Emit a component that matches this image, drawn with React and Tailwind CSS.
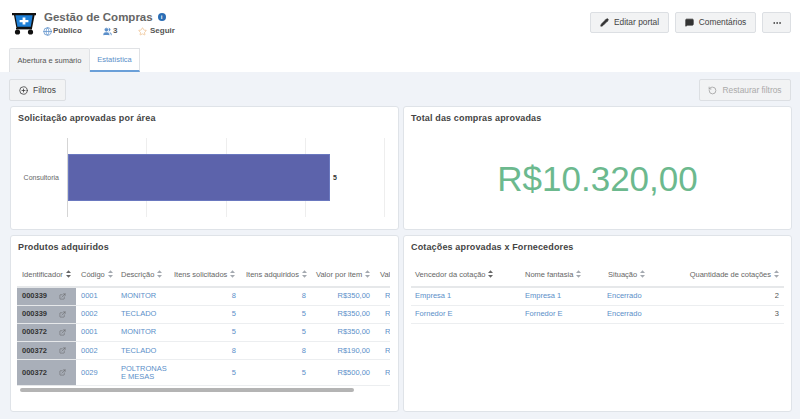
import React from "react";
import { Globe, Users, Star, Pencil, MessageSquare, MoreHorizontal, RotateCcw, CirclePlus, ExternalLink } from "lucide-react";

const font = "font-['Liberation_Sans',Arial,sans-serif]";

function Sort({ active = false }) {
  return (
    <svg width="5" height="8" viewBox="0 0 6 9" className={`inline-block ml-[3px] align-[-1px] ${active ? "text-[#666]" : "text-[#a4a9b0]"}`} fill="currentColor">
      <path d="M3 0 6 3.4H0zM3 9 0 5.6h6z" />
    </svg>
  );
}

function Cart() {
  return (
    <svg width="24" height="22" viewBox="0 0 24 22" className="shrink-0 mt-[1px]">
      <path d="M0 0h24v2.2h-1.4L20 15.6H4.5L2 2.2H0z" fill="#111" />
      <path d="M3.4 2.2h17.2L18.8 13.8H5.4z" fill="#1d7fd6" />
      <path d="M10.6 4.6h2.8v2.3h3v2.4h-3v2.3h-2.8V9.3h-3V6.9h3z" fill="#fff" />
      <circle cx="5.5" cy="19" r="2.6" fill="#111" />
      <circle cx="18.5" cy="19" r="2.6" fill="#111" />
      <rect x="4" y="15" width="16" height="1.4" fill="#111" />
    </svg>
  );
}

function Btn({ icon, children, className = "" }) {
  return (
    <button className={`h-[21px] flex items-center justify-center gap-[5px] bg-[#f2f3f4] border border-[#dcdfe3] rounded-[2px] text-[8.4px] text-[#444] ${className}`}>
      {icon}
      {children}
    </button>
  );
}

function Card({ title, className = "", children }) {
  return (
    <section className={`bg-white border border-[#dfe3e8] rounded-[3px] min-w-0 ${className}`}>
      <h2 className="text-[9px] font-bold text-[#444] tracking-[0.15px] pl-[7px] pt-[4px] leading-[14px]">{title}</h2>
      {children}
    </section>
  );
}

const leftRows = [
  ["000339", "0001", "MONITOR", "8", "8", "R$350,00"],
  ["000339", "0002", "TECLADO", "5", "5", "R$350,00"],
  ["000372", "0001", "MONITOR", "5", "5", "R$350,00"],
  ["000372", "0002", "TECLADO", "8", "8", "R$190,00"],
  ["000372", "0029", "POLTRONAS E MESAS", "5", "5", "R$500,00"],
];

const Th = ({ children, className = "" }) => (
  <th className={`font-normal text-[#666] h-[25px] border-b-2 border-[#e6e8ea] px-[5px] text-left whitespace-nowrap ${className}`}>{children}</th>
);

function ProductTable() {
  return (
    <div className="overflow-hidden mx-[6px] mt-[8px] w-[373px] relative h-[134px]">
      <table className="table-fixed border-collapse text-[7.5px] leading-[8px] w-[460px]">
        <colgroup>
          <col className="w-[59px]" />
          <col className="w-[40px]" />
          <col className="w-[53px]" />
          <col className="w-[72px]" />
          <col className="w-[70px]" />
          <col className="w-[64px]" />
          <col className="w-[102px]" />
        </colgroup>
        <thead>
          <tr>
            <Th>Identificador<Sort active /></Th>
            <Th>Código<Sort /></Th>
            <Th>Descrição<Sort /></Th>
            <Th>Itens solicitados<Sort /></Th>
            <Th>Itens adquiridos<Sort /></Th>
            <Th>Valor por item<Sort /></Th>
            <Th>Valor total<Sort /></Th>
          </tr>
        </thead>
        <tbody>
          {leftRows.map((r, i) => {
            const h = i === 4 ? "h-[25.5px]" : "h-[18.2px]";
            return (
              <tr key={i} className={`${h} text-[#5b8fc9]`}>
                <td className="bg-[#a9afb9] border-b border-[#e6e8ea] text-[#333] font-bold px-[5px]">
                  <div className="flex items-center justify-between pr-[5px]">
                    <span>{r[0]}</span>
                    <ExternalLink size={7} className="text-[#555]" strokeWidth={1.5} />
                  </div>
                </td>
                <td className="border-b border-[#eceef0] px-[5px]">{r[1]}</td>
                <td className="border-b border-[#eceef0] pl-[5px]">{r[2]}</td>
                <td className="border-b border-[#eceef0] px-[5px] text-right">{r[3]}</td>
                <td className="border-b border-[#eceef0] px-[5px] text-right">{r[4]}</td>
                <td className="border-b border-[#eceef0] px-[5px] text-right">{r[5]}</td>
                <td className="border-b border-[#eceef0] pl-[10px]">{r[5]}</td>
              </tr>
            );
          })}
        </tbody>
      </table>
      <div className="absolute left-[3px] top-[126px] w-[334px] h-[3.5px] rounded-full bg-[#b4b4b4]" />
    </div>
  );
}

function QuoteTable() {
  const rows = [
    ["Empresa 1", "Empresa 1", "Encerrado", "2"],
    ["Fornedor E", "Fornedor E", "Encerrado", "3"],
  ];
  return (
    <div className="mx-[7px] mt-[8px]">
      <table className="table-fixed border-collapse text-[7.5px] leading-[8px] w-full">
        <colgroup>
          <col className="w-[110px]" />
          <col className="w-[82px]" />
          <col className="w-[70px]" />
          <col />
        </colgroup>
        <thead>
          <tr>
            <Th className="pl-[4px]">Vencedor da cotação<Sort active /></Th>
            <Th className="pl-[4px]">Nome fantasia<Sort /></Th>
            <Th>Situação<Sort /></Th>
            <Th className="text-right">Quantidade de cotações<Sort /></Th>
          </tr>
        </thead>
        <tbody>
          {rows.map((r, i) => (
            <tr key={i} className="h-[18px] text-[#5b8fc9]">
              <td className="border-b border-[#eceef0] px-[4px]">{r[0]}</td>
              <td className="border-b border-[#eceef0] px-[4px]">{r[1]}</td>
              <td className="border-b border-[#eceef0] px-[4px]">{r[2]}</td>
              <td className="border-b border-[#eceef0] px-[5px] text-right text-[#555]">{r[3]}</td>
            </tr>
          ))}
        </tbody>
      </table>
    </div>
  );
}

function BarChart() {
  return (
    <div className="flex mt-[13px] ml-[6px] h-[79px]">
      <div className="w-[50px] flex items-center justify-end pr-[8px] pt-[2px] text-[7px] text-[#666]">Consultoria</div>
      <div className="w-[318px] relative flex justify-between border-l border-[#d5d5d5]">
        <span />
        <span className="w-px bg-[#eeeeee]" />
        <span className="w-px bg-[#eeeeee]" />
        <span className="w-px bg-[#eeeeee]" />
        <span className="w-px bg-[#eeeeee]" />
        <div className="absolute left-0 top-[16px] w-[262px] h-[47px] bg-[#5c63ab] border border-[#6a78bf] flex items-center">
          <span className="ml-[264px] mt-[2px] text-[7px] font-bold text-[#333]">5</span>
        </div>
      </div>
    </div>
  );
}

export default function App() {
  return (
    <div className={`${font} w-[800px] h-[419px] overflow-hidden bg-[#f0f3f8] flex flex-col`}>
      <header className="bg-white h-[72px] shrink-0 flex flex-col justify-between">
        <div className="flex justify-between pl-[12px] pr-[9px] pt-[12px]">
          <div className="flex gap-[8px]">
            <Cart />
            <div className="-mt-[2px]">
              <div className="flex items-center gap-[5px] text-[11.5px] text-[#666] font-bold leading-[14px]">
                Gestão de Compras
                <span className="w-[8px] h-[8px] rounded-full bg-[#2a6db5] text-white text-[6px] leading-[8px] text-center font-bold">i</span>
              </div>
              <div className="flex text-[8px] font-bold text-[#555] mt-[1px] leading-[12px]">
                <span className="flex items-center gap-[1px] w-[60px] -ml-[1px]"><Globe size={9} className="text-[#5b8fc9]" />Público</span>
                <span className="flex items-center gap-[1px] w-[35px]"><Users size={9} className="text-[#5b8fc9] fill-[#5b8fc9]" />3</span>
                <span className="flex items-center gap-[3px]"><Star size={9} className="text-[#eec08f]" />Seguir</span>
              </div>
            </div>
          </div>
          <div className="flex gap-[6px]">
            <Btn className="w-[79px]" icon={<Pencil size={9} className="text-[#333] fill-[#333]" />}>Editar portal</Btn>
            <Btn className="w-[81px]" icon={<MessageSquare size={9} className="text-[#333] fill-[#333]" />}>Comentários</Btn>
            <Btn className="w-[29px]" icon={<MoreHorizontal size={10} className="text-[#333]" />} />
          </div>
        </div>
        <nav className="flex pl-[9px] text-[7.5px] h-[24px]">
          <div className="w-[81px] flex items-center justify-center bg-[#f2f3f4] border border-b-0 border-[#e0e2e5] rounded-t-[2px] text-[#555]">Abertura e sumário</div>
          <div className="w-[50px] flex items-center justify-center bg-white border-t border-r border-[#e0e2e5] border-b-2 border-b-[#6a9fd8] text-[#5b8fc9]">Estatística</div>
        </nav>
      </header>

      <div className="flex justify-between px-[9px] mt-[7px] h-[22px] shrink-0">
        <Btn className="w-[57px] h-[22px]!" icon={<CirclePlus size={9} className="text-[#333]" />}>Filtros</Btn>
        <Btn className="w-[92px] h-[22px]! text-[#aaa]!" icon={<RotateCcw size={9} className="text-[#999]" />}>Restaurar filtros</Btn>
      </div>

      <main className="grid grid-cols-[389px_389px] grid-rows-[124px_177px] gap-x-[4px] gap-y-[5px] pl-[10px] mt-[5px]">
        <Card title="Solicitação aprovadas por área"><BarChart /></Card>
        <Card title="Total das compras aprovadas" className="flex flex-col">
          <div className="flex-1 flex items-center justify-center text-[35px] text-[#6cb98e] pt-[4px]">R$10.320,00</div>
        </Card>
        <Card title="Produtos adquiridos"><ProductTable /></Card>
        <Card title="Cotações aprovadas x Fornecedores"><QuoteTable /></Card>
      </main>
    </div>
  );
}
